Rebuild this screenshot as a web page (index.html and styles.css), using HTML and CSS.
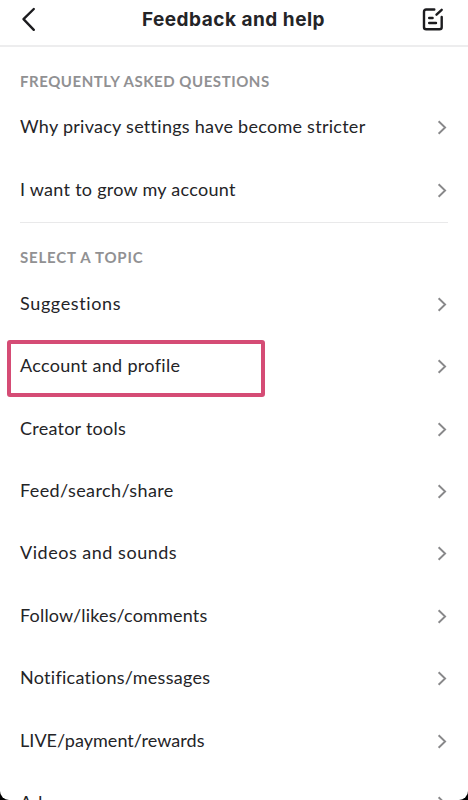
FILE: index.html
```html
<!DOCTYPE html>
<html lang="en">
<head>
<meta charset="utf-8">
<title>Feedback and help</title>
<link rel="stylesheet" href="styles.css">
</head>
<body>
<svg class="symbols" aria-hidden="true"><symbol id="chevron" viewBox="0 0 12 18"><path d="M2.6 3.3 9.1 9.5 2.6 15.7"/></symbol></svg>
<main class="screen">
  <header class="bar">
    <svg class="back" viewBox="0 0 20 28"><path d="M14.8 4 4.5 14.2 14.8 24.8"/></svg>
    <h1 class="title">Feedback and help</h1>
    <svg class="compose" viewBox="0 0 24 26"><path d="M13.3 3.5H5.2Q3 3.5 3 5.7V21.2Q3 23.2 5.2 23.2H18.5Q20.7 23.2 20.7 21.2V11M15.5 8.7 20.7 3.8M8.2 12H11.6M8.2 17H15"/></svg>
  </header>
  <section class="group faq">
    <h2 class="label l1">FREQUENTLY ASKED QUESTIONS</h2>
    <a class="row"><span class="t1">Why privacy settings have become stricter</span><svg class="chev"><use href="#chevron"/></svg></a>
    <a class="row"><span class="t2">I want to grow my account</span><svg class="chev"><use href="#chevron"/></svg></a>
  </section>
  <section class="group topics">
    <h2 class="label l2">SELECT A TOPIC</h2>
    <a class="row"><span class="t3">Suggestions</span><svg class="chev"><use href="#chevron"/></svg></a>
    <a class="row selected"><span class="t4">Account and profile</span><svg class="chev"><use href="#chevron"/></svg></a>
    <a class="row"><span class="t5">Creator tools</span><svg class="chev"><use href="#chevron"/></svg></a>
    <a class="row"><span class="t6">Feed/search/share</span><svg class="chev"><use href="#chevron"/></svg></a>
    <a class="row"><span class="t7">Videos and sounds</span><svg class="chev"><use href="#chevron"/></svg></a>
    <a class="row"><span class="t8">Follow/likes/comments</span><svg class="chev"><use href="#chevron"/></svg></a>
    <a class="row"><span class="t9">Notifications/messages</span><svg class="chev"><use href="#chevron"/></svg></a>
    <a class="row"><span class="t10">LIVE/payment/rewards</span><svg class="chev"><use href="#chevron"/></svg></a>
    <a class="row"><span class="t11">Ads</span><svg class="chev"><use href="#chevron"/></svg></a>
  </section>
</main>
</body>
</html>
```
FILE: styles.css
```css
* { box-sizing: border-box; }
html { background: #000; }
body { margin: 0; font-family: Lato, "Liberation Sans", sans-serif; color: #242427; }
.symbols { position: absolute; width: 0; height: 0; }
.screen { height: 800px; overflow: hidden; background: #fff; border-radius: 0 0 9px 9px; }
svg { fill: none; stroke: #1c1c1f; stroke-width: 2.4; stroke-linecap: round; stroke-linejoin: round; }
.bar { height: 47px; display: flex; align-items: center; justify-content: space-between; padding: 0 23px 7px 19px; border-bottom: 2px solid #ededee; }
.back { width: 20px; height: 28px; }
.compose { width: 24px; height: 26px; }
.title { margin: 2px 0 0 7px; font-family: Inter, "Liberation Sans", sans-serif; font-size: 19px; line-height: 24px; font-weight: 700; letter-spacing: .5px; white-space: nowrap; }
.group { margin: 0 20px; }
.faq { height: 176px; padding-top: 25px; border-bottom: 1px solid #e9e9ea; }
.topics { padding-top: 25px; }
.label { margin: 0; height: 24.5px; font-size: 15px; line-height: 19px; font-weight: 700; color: #919193; white-space: nowrap; }
.faq .label { height: 24px; }
.row { position: relative; height: 62.45px; display: flex; align-items: center; justify-content: space-between; font-size: 18px; line-height: 24px; white-space: nowrap; }
.row span { padding-bottom: 2px; }
.chev { width: 12px; height: 18px; stroke: #88888a; stroke-width: 1.9; stroke-linecap: butt; stroke-linejoin: miter; }
.selected::before { content: ""; box-sizing: border-box; position: absolute; left: -13px; top: 5px; width: 258px; height: 57px; border: 4px solid #d54c75; border-radius: 3px; }
.l1 { letter-spacing: .54px; }
.l2 { letter-spacing: .8px; }
.t1, .t2 { letter-spacing: .27px; }
.t3 { letter-spacing: .63px; }
.t4 { letter-spacing: .31px; }
.t5 { letter-spacing: .25px; }
.t6 { letter-spacing: .4px; }
.t7 { letter-spacing: .52px; }
.t8 { letter-spacing: .18px; }
.t9 { letter-spacing: .28px; }
.t10 { letter-spacing: .05px; }
.t11 { letter-spacing: .3px; }
```
